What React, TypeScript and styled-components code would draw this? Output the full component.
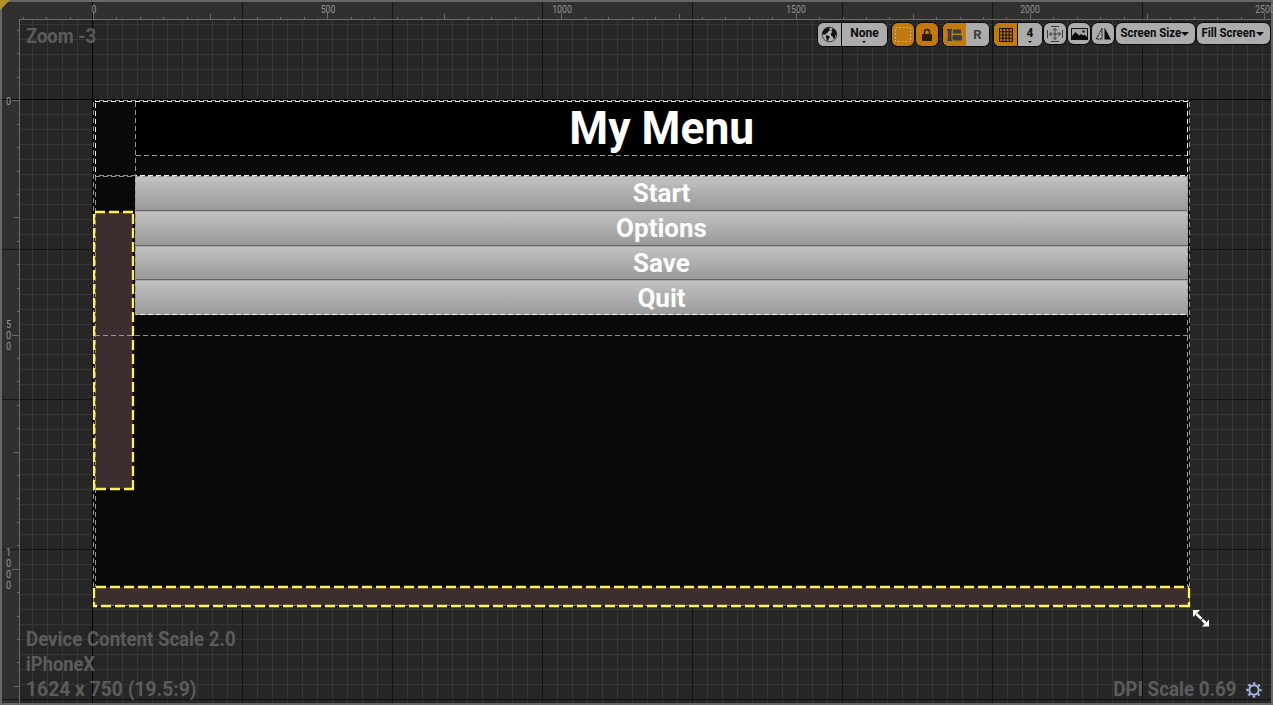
import React from 'react';
import styled, { createGlobalStyle, css } from 'styled-components';

const Global = createGlobalStyle`
  * { box-sizing: border-box; }
  html, body { margin: 0; padding: 0; overflow: hidden; background: #262626; }
  body { font-family: Roboto, "Liberation Sans", sans-serif; }
`;

const UNIT = 0.46846;
const RULER = 17;

/* ---------- shell ---------- */

const Shell = styled.main`
  position: relative;
  width: 1273px;
  height: 705px;
  border: 2px solid #676767;
  display: grid;
  grid-template-columns: ${RULER}px 1fr;
  grid-template-rows: ${RULER}px 1fr;
  background: #303030;
`;

const CornerFlag = styled.i`
  position: absolute;
  left: -2px;
  top: -2px;
  border-top: 10px solid #b2922b;
  border-right: 10px solid transparent;
`;

const TopRuler = styled.div`
  position: relative;
  background: linear-gradient(#000, #000) 73px 0 / 1px 100% no-repeat,
    repeating-linear-gradient(90deg, #161616 0 1px, transparent 1px 150px) 223px 0 / 1200px 100% no-repeat,
    #303030;
`;

const LeftRuler = styled.div`
  position: relative;
  background: linear-gradient(#000, #000) 0 80px / 100% 1px no-repeat,
    repeating-linear-gradient(180deg, #161616 0 1px, transparent 1px 150px) 0 80px / 100% 700px no-repeat,
    #303030;
`;

const Ticks = styled.svg`
  position: absolute;
  left: 0;
  top: 0;
  overflow: visible;
`;

const TopLabel = styled.span`
  position: absolute;
  top: 2px;
  width: 40px;
  margin-left: -20px;
  text-align: center;
  font-size: 10px;
  line-height: 12px;
  color: #959595;
  transform: scaleX(0.87);
`;

const LeftLabel = styled.span`
  position: absolute;
  left: 2px;
  width: 9px;
  display: flex;
  flex-direction: column;
  align-items: center;
  transform: translateY(-50%) scaleX(0.92);
  font-size: 10px;
  line-height: 11px;
  color: #959595;
`;

const Canvas = styled.div`
  position: relative;
  border-left: 1px solid #6a6a6a;
  border-top: 1px solid #6a6a6a;
  background:
    linear-gradient(#000, #000) 72px 0 / 1px 100% no-repeat,
    linear-gradient(#000, #000) 0 79px / 100% 1px no-repeat,
    repeating-linear-gradient(90deg, #121212 0 1px, transparent 1px 150px) 72px 0 / 1500px 100% no-repeat,
    repeating-linear-gradient(180deg, #121212 0 1px, transparent 1px 150px) 0 79px / 100% 900px no-repeat,
    repeating-linear-gradient(90deg, transparent 0 12px, #363636 12px 13px, transparent 13px 15px),
    repeating-linear-gradient(180deg, transparent 0 4px, #363636 4px 5px, transparent 5px 15px),
    #262626;
`;

/* ---------- designed screen ---------- */

const Screen = styled.section`
  position: absolute;
  left: 73px;
  top: 80px;
  width: 1097px;
  height: 507px;
  padding: 1px 2px 0 42px;
  background: rgba(3, 3, 3, 0.84);
  display: flex;
  flex-direction: column;
`;

const Title = styled.h1`
  margin: 0 0 20px;
  height: 55px;
  background: #000;
  color: #fff;
  text-align: center;
  font-size: 46px;
  line-height: 55px;
  font-weight: 700;
`;

const Fit = styled.span<{ $x: number; $origin?: string }>`
  display: inline-block;
  white-space: nowrap;
  transform: scaleX(${p => p.$x});
  transform-origin: ${p => p.$origin ?? 'center'};
`;

const MenuButton = styled.button`
  display: block;
  width: 100%;
  height: 34.75px;
  padding: 0;
  border: 0;
  border-bottom: 1px solid #636363;
  background: linear-gradient(#c2c2c2, #9a9a9a);
  color: #fff;
  font: 700 26px/34px Roboto, sans-serif;
  & + & { box-shadow: inset 0 1px rgba(0, 0, 0, 0.12); }
  &:last-child { border-bottom: 0; }
`;

const Outlines = styled.svg`
  position: absolute;
  left: -2px;
  top: -2px;
  pointer-events: none;
`;

/* ---------- toolbar ---------- */

const Toolbar = styled.div`
  position: absolute;
  top: 20px;
  right: 0;
  display: flex;
  align-items: flex-start;
`;

const Group = styled.div<{ $gap: number; $short?: boolean }>`
  display: flex;
  height: ${p => (p.$short ? 23 : 25)}px;
  margin-left: ${p => p.$gap}px;
  border: 1px solid #0b0b0b;
  border-radius: 7px;
  overflow: hidden;
  background: #acacac;
`;

const Cell = styled.button<{ $w: number; $on?: boolean; $line?: boolean; $glyph?: boolean }>`
  width: ${p => p.$w}px;
  height: 100%;
  padding: 0;
  border: 0;
  display: flex;
  align-items: center;
  justify-content: center;
  background: ${p => (p.$on ? '#c27a10' : '#acacac')};
  color: ${p => (p.$glyph ? '#3c3c3c' : '#0a0a0a')};
  font: 700 ${p => (p.$glyph ? 13 : 12)}px/14px Roboto, sans-serif;
  white-space: nowrap;
  ${p => p.$line && css`border-right: 1px solid #0b0b0b;`}
`;

const Stack = styled.span`
  display: flex;
  flex-direction: column;
  align-items: center;
  gap: 1px;
  margin-top: -1px;
`;

const Caret = styled.i<{ $s: number }>`
  border: ${p => p.$s}px solid transparent;
  border-top-color: #0a0a0a;
  border-bottom: 0;
`;

const MenuLabel = styled.span`
  display: block;
  margin: -1px -1px 0 -3px;
  transform: scaleX(0.95);
`;

/* ---------- overlay text ---------- */

const Note = styled.div<{ $side: 'left' | 'right' }>`
  position: absolute;
  ${p => p.$side}: ${p => (p.$side === 'left' ? '24px' : '9px')};
  color: #5c5c5c;
  font-weight: 700;
  font-size: 20px;
  line-height: 25px;
  display: flex;
`;

const ZoomNote = styled(Note)`top: 22px;`;
const DeviceNote = styled(Note)`
  bottom: 1px;
  flex-direction: column;
  align-items: flex-start;
`;
const DpiNote = styled(Note)`
  bottom: 1px;
  align-items: center;
  gap: 10px;
`;

const Cursor = styled.svg`
  position: absolute;
  left: 1190px;
  top: 607px;
`;

const steps = (n: number) => Array.from({ length: n }, (_, i) => i);

const tickLength = (i: number) => (i % 10 === 0 ? 6 : i % 5 === 0 ? 5 : 2);

function HorizontalRuler() {
  return (
    <TopRuler>
      <Ticks width="1252" height="17">
        {steps(54).map(k => {
          const i = k - 3;
          const x = Math.round(74 + i * 50 * UNIT) + 0.5;
          return <path key={i} d={`M${x} 17v-${tickLength(Math.abs(i))}`} stroke="#6a6a6a" />;
        })}
      </Ticks>
      {[0, 500, 1000, 1500, 2000, 2500].map(v => (
        <TopLabel key={v} style={{ left: 74.5 + v * UNIT }}>{v}</TopLabel>
      ))}
    </TopRuler>
  );
}

function VerticalRuler() {
  return (
    <LeftRuler>
      <Ticks width="17" height="684">
        {steps(29).map(k => {
          const i = k - 3;
          const y = Math.round(81.3 + i * 50 * UNIT) + 0.5;
          return <path key={i} d={`M17 ${y}h-${tickLength(Math.abs(i)) + (i % 10 === 0 ? 1 : 0)}`} stroke="#6a6a6a" />;
        })}
      </Ticks>
      {['0', '500', '1000'].map(v => (
        <LeftLabel key={v} style={{ top: 81.5 + Number(v) * UNIT }}>
          {v.split('').map((c, i) => <span key={i}>{c}</span>)}
        </LeftLabel>
      ))}
    </LeftRuler>
  );
}

const GlobeIcon = () => (
  <svg width="17" height="17" viewBox="0 0 17 17">
    <circle cx="8.5" cy="8.5" r="7.3" fill="#b4b4b4" stroke="#333" strokeWidth="0.9" />
    <path d="M1.600 6.200 3.200 3.200 6 1.500 9.400 1.300 8.200 3 9.200 4.200 7.400 5.200 6.400 7 5.200 7.400 4.600 8.800 2.400 8.400 1.300 8.800zM5 9.400 7.400 9.600 9 11.200 7.800 12.600 7 15.400 5.800 13.800 4.800 11.200zM10.200 4.400 11.600 2.400 13.400 3.200 15.200 5.600 15.700 8.600 14.600 9.200 14.200 11.600 12.600 13.400 11.800 10.800 10.200 9.800 9.800 7.400 11.400 6z" fill="#111" />
  </svg>
);

const OutlineIcon = () => (
  <svg width="18" height="17" viewBox="0 0 18 17">
    <rect x="1.5" y="1.5" width="15" height="14" fill="none" stroke="#7d6a48" />
    <rect x="1.5" y="1.5" width="15" height="14" fill="none" stroke="#c4bba6" strokeDasharray="2.200 1.400" />
  </svg>
);

const LockIcon = () => (
  <svg width="12" height="14" viewBox="0 0 12 14">
    <rect x="1" y="6" width="10" height="7" rx="0.8" fill="#2b1c06" />
    <path d="M3.5 6.500V4a2.500 2.500 0 0 1 5 0v2.500" fill="none" stroke="#2b1c06" strokeWidth="1.400" />
  </svg>
);

const LayoutIcon = () => (
  <svg width="15" height="14" viewBox="0 0 15 14">
    <g fill="#3b3d42">
      <path d="M0 1h5v1.500H4.500v9H5V13H0v-1.500h.8v-9H0z" />
      <rect x="6" y="1.500" width="8" height="4" rx="1" />
      <rect x="5.500" y="7" width="9.500" height="5.500" rx="1.500" />
    </g>
  </svg>
);

const GridIcon = () => (
  <svg width="14" height="14" viewBox="0 0 14 14">
    <path d="M.5.500h13v13H.5zM3.750.500v13M7 .5v13M10.250.500v13M.5 3.750h13M.5 7h13M.5 10.250h13" fill="none" stroke="#1c1204" strokeWidth="1.200" />
  </svg>
);

const ResizeIcon = () => (
  <svg width="18" height="16" viewBox="0 0 18 16">
    <path d="M5 .5h8M5 15.500h8M1.500 4v8M16.500 4v8M9 2.500v11M3.500 8h11M7 4.500l2-2 2 2M7 11.500l2 2 2-2M5.500 6l-2 2 2 2M12.500 6l2 2-2 2" fill="none" stroke="#3c3c3c" />
  </svg>
);

const PictureIcon = () => (
  <svg width="17" height="12" viewBox="0 0 17 12">
    <rect x=".5" y=".5" width="16" height="11" fill="#a4a4a4" stroke="#111" />
    <path d="M1 11V8l3.500-4L8 7.500l2-1.500 2 1.500 1.500-1L16 9v2z" fill="#0a0a0a" />
    <circle cx="12.500" cy="3.500" r="1.200" fill="#222" />
  </svg>
);

const MirrorIcon = () => (
  <svg width="17" height="13" viewBox="0 0 17 13">
    <path d="M7 1.500V12H1.200z" fill="none" stroke="#111" strokeDasharray="2 .7" />
    <path d="M9.500.500V12.500H16z" fill="#0a0a0a" />
  </svg>
);

const GearIcon = () => (
  <svg width="16" height="16" viewBox="0 0 16 16">
    <circle cx="8" cy="8" r="4.700" fill="none" stroke="#a9b9e8" strokeWidth="2" />
    <circle cx="8" cy="8" r="6.700" fill="none" stroke="#a9b9e8" strokeWidth="2" strokeDasharray="2.400 2.862" strokeDashoffset="1.200" />
  </svg>
);

function DesignerToolbar() {
  return (
    <Toolbar>
      <Group $gap={0}>
        <Cell $w={24} $line><GlobeIcon /></Cell>
        <Cell $w={45}><Stack>None<Caret $s={2} /></Stack></Cell>
      </Group>
      <Group $gap={3}><Cell $w={22} $on><OutlineIcon /></Cell></Group>
      <Group $gap={0}><Cell $w={22} $on><LockIcon /></Cell></Group>
      <Group $gap={3}>
        <Cell $w={23} $on><LayoutIcon /></Cell>
        <Cell $w={23} $glyph>R</Cell>
      </Group>
      <Group $gap={3}>
        <Cell $w={24} $on $line><GridIcon /></Cell>
        <Cell $w={24}><Stack>4<Caret $s={2} /></Stack></Cell>
      </Group>
      <Group $gap={0} $short><Cell $w={22}><ResizeIcon /></Cell></Group>
      <Group $gap={0} $short><Cell $w={22}><PictureIcon /></Cell></Group>
      <Group $gap={0} $short><Cell $w={22}><MirrorIcon /></Cell></Group>
      <Group $gap={0} $short><Cell $w={79}><MenuLabel>Screen Size</MenuLabel><Caret $s={4} /></Cell></Group>
      <Group $gap={0} $short><Cell $w={73}><MenuLabel>Fill Screen</MenuLabel><Caret $s={4} /></Cell></Group>
    </Toolbar>
  );
}

function WidgetOutlines() {
  return (
    <Outlines width="1273" height="705" fill="none">
      <g stroke="#939393" strokeDasharray="5 3">
        <path d="M95 100.500H1189" strokeDashoffset="4" />
        <path d="M93.500 102V606M1189.500 102V606" />
        <path d="M135.500 102V315M136 155.500H1187" />
        <path d="M95 335.500H1188M95 176.500H1188" />
        <path d="M95 175.500H136" strokeDashoffset="4" />
        <path d="M95.500 176V606M1187.500 176V606" />
      </g>
      <g stroke="#f4f4f4" strokeDasharray="5 3">
        <path d="M95 101.500H1188M95.500 103V176M1187.500 103V176" />
        <path d="M136 175.500H1188M136 314.500H1188" strokeDashoffset="4" />
      </g>
      <rect x="94" y="212" width="39" height="277" fill="#3c2e2f" />
      <path d="M95 335.500H134" stroke="#9a9a9a" strokeDasharray="5 3" />
      <rect x="94" y="587" width="1095" height="19" fill="#3c2e2f" />
      <path d="M95.500 212V490M93 605.500H1189" stroke="#8f8287" strokeDasharray="5 3" />
      <g stroke="#fff15e" strokeWidth="2.300" strokeDasharray="10 4">
        <path d="M95 212H134M133 214V490M94 214V490" />
        <path d="M134 489H94" />
        <path d="M96 587H1189M101 606H1190" />
        <path d="M94 588V607M1189 588V607" />
        <path d="M93 606H97M1187 606H1190" strokeDasharray="none" />
      </g>
    </Outlines>
  );
}

export default function App() {
  return (
    <>
      <Global />
      <Shell>
        <span />
        <HorizontalRuler />
        <VerticalRuler />
        <Canvas>
          <Screen>
            <Title><Fit $x={0.965}>My Menu</Fit></Title>
            {['Start', 'Options', 'Save', 'Quit'].map(t => <MenuButton key={t}>{t}</MenuButton>)}
          </Screen>
        </Canvas>
        <WidgetOutlines />
        <ZoomNote $side="left"><Fit $x={0.92} $origin="left">Zoom -3</Fit></ZoomNote>
        <DeviceNote $side="left">
          <Fit $x={0.933} $origin="left">Device Content Scale 2.0</Fit>
          <Fit $x={0.915} $origin="left">iPhoneX</Fit>
          <Fit $x={0.965} $origin="left">1624 x 750 (19.5:9)</Fit>
        </DeviceNote>
        <DpiNote $side="right">
          <Fit $x={0.938} $origin="right">DPI Scale 0.69</Fit>
          <GearIcon />
        </DpiNote>
        <DesignerToolbar />
        <Cursor width="18" height="19" viewBox="0 0 18 19">
          <path d="M4.500 5 13.500 14" stroke="#fff" strokeWidth="2.600" strokeDasharray="7 1" />
          <path d="M1 1H8L1 8zM17 17.500H10L17 10.500z" fill="#fff" />
        </Cursor>
        <CornerFlag />
      </Shell>
    </>
  );
}
